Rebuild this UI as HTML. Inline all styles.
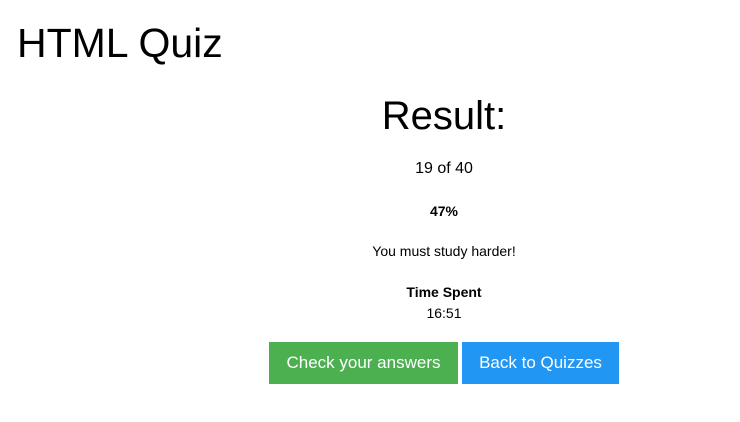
<!DOCTYPE html>
<html><head><style>
body{margin:0;width:740px;height:422px;background:#fff;font-family:"Liberation Sans",sans-serif;color:#000;position:relative;overflow:hidden}
.a{position:absolute;white-space:nowrap}
.c{left:144px;width:600px;text-align:center}
.btn{position:absolute;top:342px;height:42px;color:#fff;font-size:17px;line-height:42px;text-align:center}
</style></head><body>
<div class="a" style="left:17px;top:19px;font-size:41px;line-height:48px">HTML Quiz</div>
<div class="a c" style="top:92px;font-size:40px;line-height:48px">Result:</div>
<div class="a c" style="top:158px;font-size:16px;line-height:22px">19 of 40</div>
<div class="a c" style="top:202px;font-size:14px;line-height:18px;font-weight:bold">47%</div>
<div class="a c" style="top:242px;font-size:14px;line-height:18px">You must study harder!</div>
<div class="a c" style="top:283px;font-size:14px;line-height:18px;font-weight:bold">Time Spent</div>
<div class="a c" style="top:304px;font-size:14px;line-height:18px">16:51</div>
<div class="btn" style="left:269px;width:189px;background:#4CAF50">Check your answers</div>
<div class="btn" style="left:462px;width:157px;background:#2196F3">Back to Quizzes</div>
</body></html>
